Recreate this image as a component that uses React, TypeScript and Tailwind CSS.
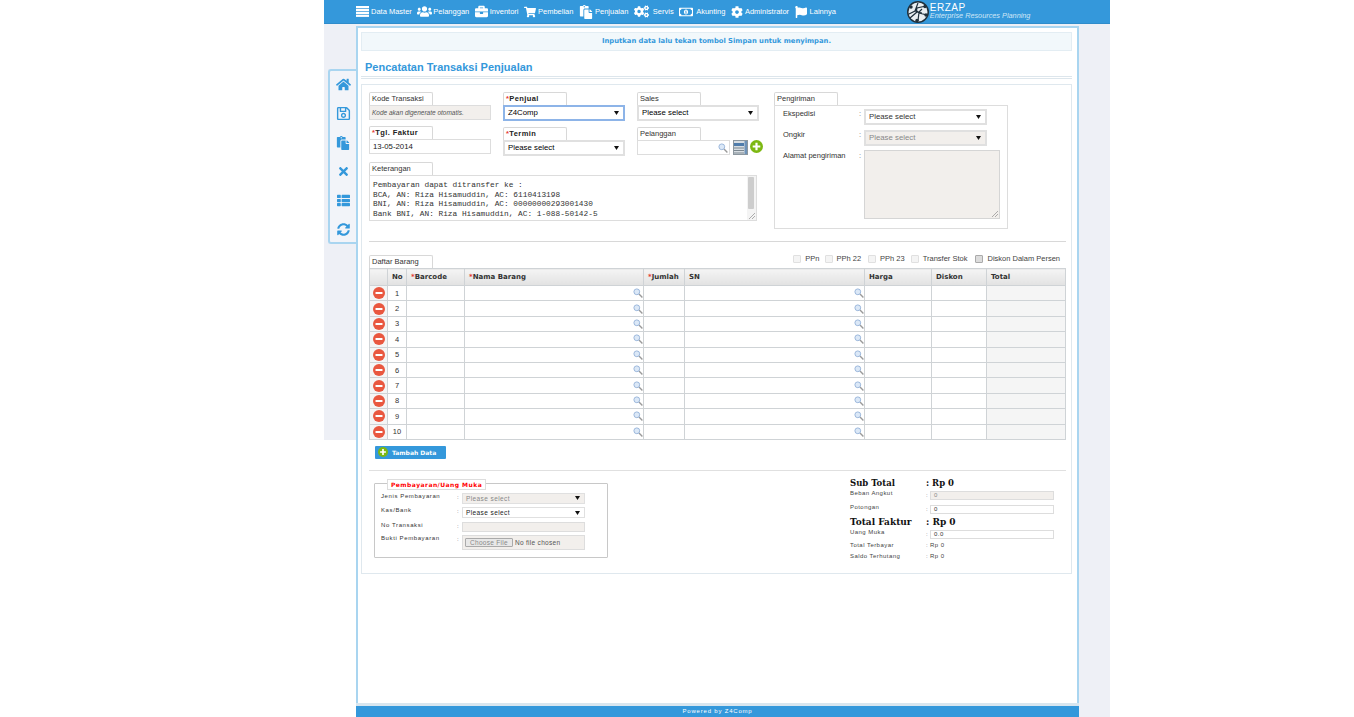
import type { ReactNode } from "react";
import {
  FaBriefcase,
  FaCog,
  FaCogs,
  FaFlag,
  FaHome,
  FaPaste,
  FaRegMoneyBillAlt,
  FaRegSave,
  FaShoppingCart,
  FaSyncAlt,
  FaThList,
  FaTimes,
  FaUsers,
} from "react-icons/fa";

function MasterIcon() {
  return (
    <svg width="13" height="11" viewBox="0 0 13 11" fill="#fff">
      <rect y="0" width="13" height="2.2" />
      <rect y="2.9" width="13" height="2.2" />
      <rect y="5.8" width="13" height="2.2" />
      <rect y="8.7" width="13" height="2.2" />
    </svg>
  );
}

const navItems = [
  { label: "Data Master", icon: <MasterIcon />, box: "w-[15px]" },
  { label: "Pelanggan", icon: <FaUsers size={15} />, box: "w-[16px]" },
  { label: "Inventori", icon: <FaBriefcase size={13} />, box: "w-[15px]" },
  { label: "Pembelian", icon: <FaShoppingCart size={12} />, box: "w-[14px]" },
  { label: "Penjualan", icon: <FaPaste size={14} />, box: "w-[16px]" },
  { label: "Servis", icon: <FaCogs size={15} />, box: "w-[19px]" },
  { label: "Akunting", icon: <FaRegMoneyBillAlt size={14} />, box: "w-[17px]" },
  { label: "Administrator", icon: <FaCog size={12} />, box: "w-[14px]" },
  { label: "Lainnya", icon: <FaFlag size={12} />, box: "w-[15px]" },
];

const sideIcons = [
  <FaHome size={15} key="home" />,
  <FaRegSave size={15} key="save" />,
  <FaPaste size={14} key="paste" />,
  <FaTimes size={13} key="close" />,
  <FaThList size={13} key="list" />,
  <FaSyncAlt size={13} key="sync" />,
];

const rows = [1, 2, 3, 4, 5, 6, 7, 8, 9, 10];

function Arrow() {
  return (
    <svg width="5" height="4" viewBox="0 0 5 4" className="shrink-0">
      <path d="M0 0h5L2.5 4z" fill="#111" />
    </svg>
  );
}

function SearchIcon() {
  return (
    <svg width="10" height="10" viewBox="0 0 10 10" className="shrink-0">
      <path d="M6 6l3.4 3.4" stroke="#9a9a9a" strokeWidth="1.4" />
      <circle cx="3.8" cy="3.8" r="2.9" fill="#dbe8f7" stroke="#9db8dc" strokeWidth="1" />
    </svg>
  );
}

function MinusIcon() {
  return (
    <svg width="12" height="12" viewBox="0 0 12 12">
      <circle cx="6" cy="6" r="6" fill="#e9573f" />
      <rect x="2.5" y="5" width="7" height="2" rx="0.5" fill="#fff" />
    </svg>
  );
}

function PlusIcon({ size = 13 }: { size?: number }) {
  return (
    <svg width={size} height={size} viewBox="0 0 12 12" className="shrink-0">
      <circle cx="6" cy="6" r="6" fill="#7db812" />
      <path d="M5 2.5h2V5h2.5v2H7v2.5H5V7H2.5V5H5z" fill="#fff" />
    </svg>
  );
}

function CalendarIcon() {
  return (
    <svg width="15" height="15" viewBox="0 0 15 15" className="shrink-0">
      <rect x="0.5" y="0.5" width="14" height="14" fill="#d7dde2" stroke="#8c979f" />
      <rect x="1" y="3" width="10" height="3" fill="#4f7cab" />
      <path d="M1 8h10M1 10.5h10M1 13h10" stroke="#7b8790" />
      <rect x="11.5" y="1" width="2.5" height="13" fill="#6f93b8" />
    </svg>
  );
}

function Grip() {
  return (
    <svg width="7" height="7" viewBox="0 0 7 7" className="absolute bottom-px right-px">
      <path d="M1 7l6-6M4 7l3-3" stroke="#999" strokeWidth="0.8" />
    </svg>
  );
}

function Tab({ label, required, strong }: { label: string; required?: boolean; strong?: boolean }) {
  return (
    <div
      className={`flex h-[13px] w-[64px] items-center rounded-t-[2px] border border-b-0 border-[#d8d8d8] bg-white pl-[2px] text-[7.5px] ${
        strong ? "font-bold tracking-[0.4px] text-[#222]" : "text-[#333]"
      }`}
    >
      {required && <span className="text-[#e53935]">*</span>}
      {label}
    </div>
  );
}

function SelectBox({
  value,
  className = "",
}: {
  value: string;
  className?: string;
}) {
  return (
    <div
      className={`flex items-center justify-between border-2 border-[#e0e0e0] pl-[3px] pr-[4px] text-[7.8px] ${className}`}
    >
      <span>{value}</span>
      <Arrow />
    </div>
  );
}

function Field({ label, required, strong, children }: { label: string; required?: boolean; strong?: boolean; children: ReactNode }) {
  return (
    <div className="flex flex-col">
      <Tab label={label} required={required} strong={strong} />
      {children}
    </div>
  );
}

function ShipRow({ label, children }: { label: string; children: ReactNode }) {
  return (
    <div className="flex text-[7.5px] text-[#333]">
      <span className="-mt-[1px] w-[76px]">{label}</span>
      <span className="-mt-[1px] w-[5px] text-[#777]">:</span>
      {children}
    </div>
  );
}

function PayRow({ label, children, className = "" }: { label: string; children: ReactNode; className?: string }) {
  return (
    <div className={`flex text-[6px] tracking-[0.6px] text-[#333] ${className}`}>
      <span className="-mt-[1px] w-[76px]">{label}</span>
      <span className="w-[5px] text-[#555]">:</span>
      {children}
    </div>
  );
}

function TotalRow({
  label,
  raised,
  children,
  className = "",
}: {
  label: string;
  raised?: boolean;
  children: ReactNode;
  className?: string;
}) {
  return (
    <div className={`flex items-center text-[6px] tracking-[0.45px] text-[#444] ${className}`}>
      <span className={`w-[76px] ${raised ? "-mt-[3px]" : ""}`}>{label}</span>
      <span className="w-[4px] text-[#666]">:</span>
      {children}
    </div>
  );
}

function GrandRow({ label, value, className = "" }: { label: string; value: string; className?: string }) {
  return (
    <div className={`flex items-center font-['DejaVu_Serif',serif] font-bold leading-[11px] text-[#111] ${className}`}>
      <span className="w-[76px]">{label}</span>
      <span>: {value}</span>
    </div>
  );
}

function CheckItem({ label, dark, className = "" }: { label: string; dark?: boolean; className?: string }) {
  return (
    <div className={`flex items-center gap-[4px] ${className}`}>
      <span
        className={`h-[8px] w-[8px] rounded-[1px] border ${
          dark ? "border-[#aaa] bg-[#dcdcdc]" : "border-[#e0e0e0] bg-[#f4f4f4]"
        }`}
      />
      <span>{label}</span>
    </div>
  );
}

function ItemTable() {
  const head = "border border-[#cfd3d6] bg-gradient-to-b from-[#f4f4f4] to-[#e2e2e2] pl-[4px] text-left font-['DejaVu_Sans',sans-serif] text-[7px] font-bold text-[#333]";
  const cell = "border border-[#cfd3d6] p-0";
  const req = <span className="text-[#e53935]">*</span>;
  return (
    <table className="w-[696px] table-fixed border-collapse">
      <colgroup>
        <col className="w-[18px]" />
        <col className="w-[19px]" />
        <col className="w-[58px]" />
        <col className="w-[179px]" />
        <col className="w-[41px]" />
        <col className="w-[180px]" />
        <col className="w-[67px]" />
        <col className="w-[55px]" />
        <col className="w-[79px]" />
      </colgroup>
      <thead>
        <tr className="h-[17px]">
          <th className={head} />
          <th className={head}>No</th>
          <th className={head}>{req}Barcode</th>
          <th className={head}>{req}Nama Barang</th>
          <th className={head}>{req}Jumlah</th>
          <th className={head}>SN</th>
          <th className={head}>Harga</th>
          <th className={head}>Diskon</th>
          <th className={head}>Total</th>
        </tr>
      </thead>
      <tbody>
        {rows.map((row) => (
          <tr key={row} className="h-[15.4px]">
            <td className={`${cell} bg-[#f5f5f5]`}>
              <div className="flex justify-center">
                <MinusIcon />
              </div>
            </td>
            <td className={`${cell} text-center text-[7.5px] text-[#333]`}>{row}</td>
            <td className={cell} />
            <td className={cell}>
              <div className="flex justify-end">
                <SearchIcon />
              </div>
            </td>
            <td className={cell} />
            <td className={cell}>
              <div className="flex justify-end">
                <SearchIcon />
              </div>
            </td>
            <td className={cell} />
            <td className={cell} />
            <td className={`${cell} bg-[#f5f5f5]`} />
          </tr>
        ))}
      </tbody>
    </table>
  );
}

function Logo() {
  return (
    <svg width="24" height="24" viewBox="0 0 24 24" className="shrink-0">
      <circle cx="12" cy="12" r="11" fill="#20303c" />
      <circle cx="12" cy="12" r="9.5" fill="#e9eef2" />
      <path
        d="M12 3L9 11l-6 3M20 6l-9 2-1 4M21 15l-8-2-3-3M12 21l1-9 3-3M4 18l7-6 5 1"
        stroke="#20303c"
        strokeWidth="1.2"
        fill="none"
      />
      <circle cx="5" cy="7" r="1.7" fill="#20303c" />
      <circle cx="19" cy="6.5" r="1.7" fill="#20303c" />
      <circle cx="20" cy="15" r="1.7" fill="#20303c" />
      <circle cx="11" cy="20.5" r="1.7" fill="#20303c" />
    </svg>
  );
}

export default function App() {
  return (
    <div className="h-[717px] w-full overflow-hidden bg-white font-['Liberation_Sans',sans-serif]">
      <div className="ml-[324px] flex h-full w-[786px] flex-col">
        <header className="flex h-[24px] shrink-0 items-center border-b border-[#2f8ccb] bg-[#3498db] pl-[32px] text-white">
          <nav className="flex items-center gap-[5.5px] text-[7.5px]">
            {navItems.map((item) => (
              <div key={item.label} className="flex items-center">
                <div className={`flex items-center ${item.box}`}>{item.icon}</div>
                <span>{item.label}</span>
              </div>
            ))}
          </nav>
          <div className="ml-[70px] flex items-center">
            <Logo />
            <div className="flex flex-col leading-none">
              <span className="text-[10px] font-light tracking-[0.5px]">ERZAP</span>
              <span className="-mt-[1px] text-[7.3px] italic text-[#cfe6f6]">Enterprise Resources Planning</span>
            </div>
          </div>
        </header>

        <div className="flex min-h-0 flex-1">
          <aside className="h-[416px] w-[32px] shrink-0 bg-[#eef0f6] pl-[4px] pt-[45px]">
            <div className="flex h-[175px] w-[28px] flex-col items-center gap-[14px] rounded-l-[3px] border-2 border-r-0 border-[#a9d5f0] bg-[#f2f4f9] pt-[6px] text-[#3498db]">
              {sideIcons.map((icon, i) => (
                <div key={i} className="flex h-[15px] items-center justify-center">
                  {icon}
                </div>
              ))}
            </div>
          </aside>

          <main className="flex w-[723px] shrink-0 flex-col border-t-2 border-t-[#eef0f6]">
            <div className="flex flex-1 flex-col border-x-2 border-t-2 border-[#a9d5f0] pl-[3px] pr-[5px] pt-[4px]">
              <div className="flex h-[19px] items-center justify-center border border-[#e3edf3] bg-[#f2f8fb] font-['DejaVu_Sans',sans-serif] text-[6.8px] font-bold text-[#3498db]">
                Inputkan data lalu tekan tombol Simpan untuk menyimpan.
              </div>
              <h1 className="ml-[4px] mt-[9px] text-[11px] font-bold leading-[14px] text-[#3498db]">
                Pencatatan Transaksi Penjualan
              </h1>
              <div className="mt-[2px] h-[3px] border-y border-[#dde6ec]" />

              <section className="mt-[5px] h-[490px] border border-[#dfe8ee] px-[7px] pt-[7px]">
                <div className="flex">
                  <div className="w-[405px]">
                    <div className="flex gap-[12px]">
                      <div className="flex w-[122px] flex-col gap-[6px]">
                        <Field label="Kode Transaksi">
                          <div className="flex h-[15px] items-center border border-[#ddd] bg-[#f2efec] pl-[2px] text-[6.5px] italic text-[#555]">
                            Kode akan digenerate otomatis.
                          </div>
                        </Field>
                        <Field label="Tgl. Faktur" required strong>
                          <div className="flex h-[15px] items-center border border-[#ddd] pl-[3px] text-[7.8px] text-[#222]">
                            13-05-2014
                          </div>
                        </Field>
                      </div>
                      <div className="flex w-[122px] flex-col gap-[6px]">
                        <Field label="Penjual" required strong>
                          <SelectBox value="Z4Comp" className="h-[16px] !border-[#8db4e8]" />
                        </Field>
                        <Field label="Termin" required strong>
                          <SelectBox value="Please select" className="h-[16px]" />
                        </Field>
                      </div>
                      <div className="flex w-[122px] flex-col gap-[6px]">
                        <Field label="Sales">
                          <SelectBox value="Please select" className="h-[16px]" />
                        </Field>
                        <div className="flex flex-col">
                          <Tab label="Pelanggan" />
                          <div className="flex items-start gap-[2.5px]">
                            <div className="flex h-[15px] w-[93px] shrink-0 items-center justify-end border border-[#ddd] pr-[1px]">
                              <SearchIcon />
                            </div>
                            <CalendarIcon />
                            <PlusIcon />
                          </div>
                        </div>
                      </div>
                    </div>
                    <div className="mt-[6px]">
                      <Field label="Keterangan">
                        <div className="relative flex h-[46px] w-[388px] border border-[#ddd]">
                          <div className="flex-1 whitespace-pre pl-[3px] pt-[5px] font-['Liberation_Mono',monospace] text-[7.8px] leading-[9.7px] text-[#333]">
                            {"Pembayaran dapat ditransfer ke :\nBCA, AN: Riza Hisamuddin, AC: 6110413198\nBNI, AN: Riza Hisamuddin, AC: 00000000293001430\nBank BNI, AN: Riza Hisamuddin, AC: 1-088-50142-5"}
                          </div>
                          <div className="w-[9px] bg-[#f4f4f4] pl-[1px] pt-[1px]">
                            <div className="h-[32px] w-[6px] rounded-[1px] bg-[#cdcdcd]" />
                          </div>
                          <Grip />
                        </div>
                      </Field>
                    </div>
                  </div>

                  <div className="w-[234px]">
                    <Tab label="Pengiriman" />
                    <div className="flex h-[124px] flex-col gap-[5px] border border-[#ddd] pl-[8px] pt-[3px]">
                      <ShipRow label="Ekspedisi">
                        <SelectBox value="Please select" className="h-[16px] w-[123px]" />
                      </ShipRow>
                      <ShipRow label="Ongkir">
                        <SelectBox value="Please select" className="h-[16px] w-[123px] bg-[#f2efec] text-[#888]" />
                      </ShipRow>
                      <ShipRow label="Alamat pengiriman">
                        <div className="relative -mt-[1px] h-[69px] w-[136px] border border-[#d5d5d5] bg-[#f2efec]">
                          <Grip />
                        </div>
                      </ShipRow>
                    </div>
                  </div>
                </div>

                <div className="mt-[12px] h-[1px] w-[697px] bg-[#d8d8d8]" />

                <div className="mt-[13px] flex w-[696px] items-end justify-between">
                  <Tab label="Daftar Barang" />
                  <div className="mb-[6px] flex h-[7px] items-center text-[7.5px] text-[#444]">
                    <CheckItem label="PPn" className="mr-[5px]" />
                    <CheckItem label="PPh 22" className="mr-[7px]" />
                    <CheckItem label="PPh 23" className="mr-[6px]" />
                    <CheckItem label="Transfer Stok" className="mr-[8px]" />
                    <CheckItem label="Diskon Dalam Persen" dark className="mr-[5px]" />
                  </div>
                </div>
                <ItemTable />

                <button
                  type="button"
                  className="ml-[6px] mt-[6px] flex h-[13px] w-[71px] items-center gap-[4px] rounded-[1px] bg-[#3498db] pl-[3px] font-['DejaVu_Sans',sans-serif] text-[6px] font-bold text-white"
                >
                  <PlusIcon size={10} />
                  Tambah Data
                </button>

                <div className="mt-[11px] h-[1px] w-[697px] bg-[#e0e0e0]" />

                <div className="mt-[12px] flex">
                  <div className="relative ml-[5px] flex h-[75px] w-[234px] flex-col gap-[3.5px] rounded-[1px] border border-[#c8c8c8] pl-[6px] pt-[9px]">
                    <div className="absolute -top-[5px] left-[12px] flex h-[11px] items-center border border-[#ddd] bg-white px-[3px] font-['DejaVu_Sans',sans-serif] text-[6px] font-bold tracking-[0.45px] text-[#f00]">
                      Pembayaran/Uang Muka
                    </div>
                    <PayRow label="Jenis Pembayaran">
                      <SelectBox value="Please select" className="h-[11px] w-[123px] !border bg-[#f2efec] !text-[6.5px] tracking-[0.4px] text-[#888]" />
                    </PayRow>
                    <PayRow label="Kas/Bank">
                      <SelectBox value="Please select" className="h-[11px] w-[123px] !border !text-[6.5px] tracking-[0.4px] text-[#222]" />
                    </PayRow>
                    <PayRow label="No Transaksi">
                      <div className="h-[10px] w-[123px] border border-[#ddd] bg-[#f2efec]" />
                    </PayRow>
                    <PayRow label="Bukti Pembayaran">
                      <div className="flex h-[15px] w-[123px] items-center gap-[2px] border border-[#ddd] bg-[#f2efec] pl-[2px] text-[6.5px] tracking-[0.3px]">
                        <span className="flex h-[9px] items-center rounded-[1px] border border-[#aaa] bg-[#e8e8e8] px-[4px] text-[#888]">
                          Choose File
                        </span>
                        <span className="text-[#555]">No file chosen</span>
                      </div>
                    </PayRow>
                  </div>

                  <div className="ml-[242px] w-[204px] -mt-[5px]">
                    <GrandRow label="Sub Total" value="Rp 0" className="text-[8.5px]" />
                    <TotalRow label="Beban Angkut" raised className="mt-[2px]">
                      <div className="flex h-[9px] w-[124px] items-center border border-[#ddd] bg-[#f2efec] pl-[3px] text-[#888]">0</div>
                    </TotalRow>
                    <TotalRow label="Potongan" raised className="mt-[5px]">
                      <div className="flex h-[9px] w-[124px] items-center border border-[#ddd] pl-[3px] text-[#333]">0</div>
                    </TotalRow>
                    <GrandRow label="Total Faktur" value="Rp 0" className="mt-[3px] text-[9px]" />
                    <TotalRow label="Uang Muka" raised className="mt-[2px]">
                      <div className="flex h-[9px] w-[124px] items-center border border-[#ddd] pl-[3px] text-[#333]">0.0</div>
                    </TotalRow>
                    <TotalRow label="Total Terbayar" className="mt-[2px]">
                      <span>Rp 0</span>
                    </TotalRow>
                    <TotalRow label="Saldo Terhutang" className="mt-[2.5px]">
                      <span>Rp 0</span>
                    </TotalRow>
                  </div>
                </div>
              </section>
            </div>
            <footer className="flex h-[14px] shrink-0 items-end justify-center border-t-[3px] border-[#d8e6ef] bg-[#3498db] pb-[1px] text-[6px] tracking-[0.8px] text-white">
              Powered by Z4Comp
            </footer>
          </main>

          <div className="flex-1 bg-[#eef0f6]" />
        </div>
      </div>
    </div>
  );
}
